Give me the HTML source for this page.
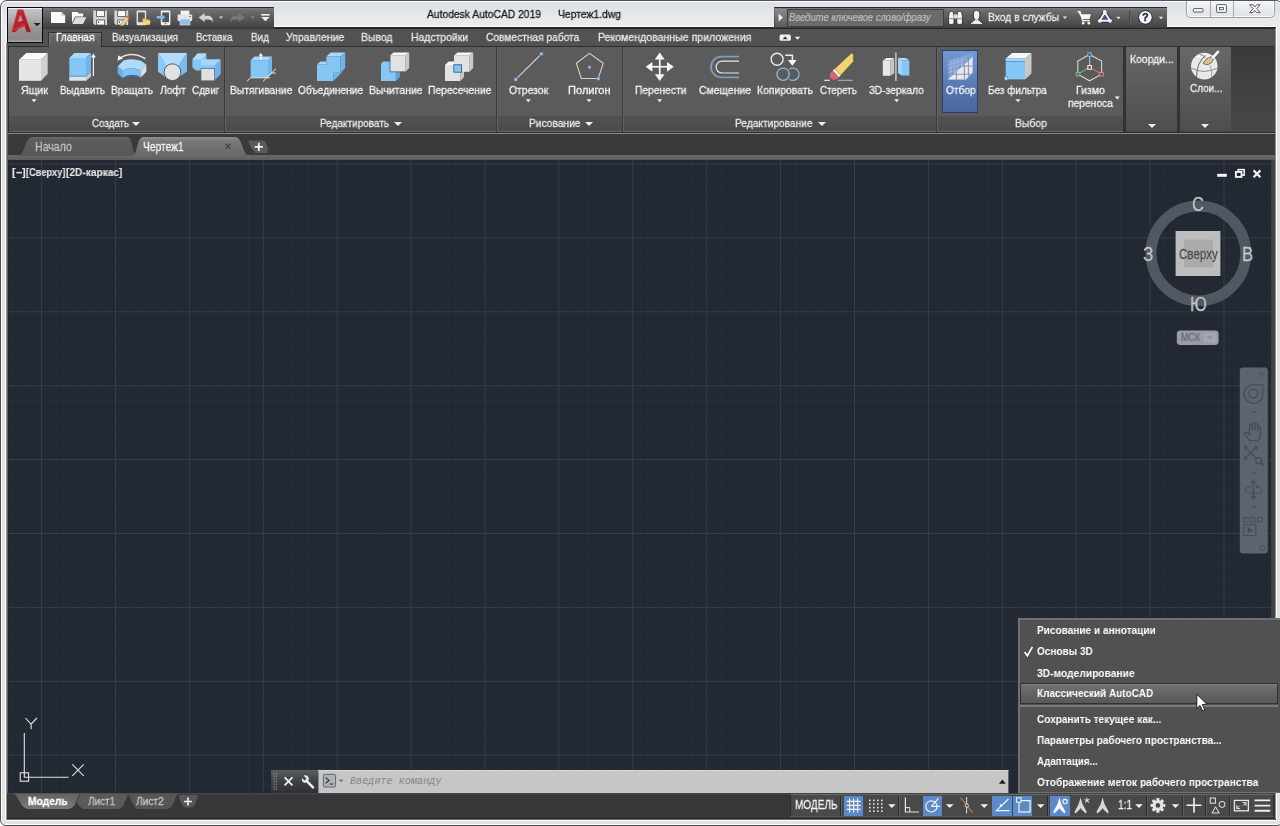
<!DOCTYPE html>
<html lang="ru">
<head>
<meta charset="utf-8">
<title>Autodesk AutoCAD 2019 - Чертеж1.dwg</title>
<style>
html,body{margin:0;padding:0;}
body{width:1280px;height:826px;overflow:hidden;position:relative;background:#fff;font-family:"Liberation Sans",sans-serif;}
.a{position:absolute;}
.t{position:absolute;white-space:pre;will-change:transform;-webkit-text-stroke:0.3px;transform-origin:0 50%;font-family:"Liberation Sans",sans-serif;}
svg{position:absolute;overflow:visible;}
#frame{left:0;top:0;width:1283px;height:826px;box-sizing:border-box;border:1px solid #505254;border-radius:7px 7px 6px 6px;
 background:linear-gradient(#dfe1e7 0px,#dee2eb 7px,#e6e7ea 14px,#ebebeb 26px,#e4e4e4 60px,#e3e3e3 100%);box-shadow:inset 0 0 0 1px #fdfdfd;}
#frameI{left:6px;top:26px;width:1271px;height:795px;box-sizing:border-box;border:1px solid #fdfdfd;background:#2a2a2a;}
#frameL{left:5px;top:43px;width:3px;height:777px;background:linear-gradient(90deg,#fdfdfd 0,#fdfdfd 33%,#a4a4a6 36%,#4a4a4c 100%);}
#frameR{left:1275px;top:28px;width:1px;height:791px;background:#8e8e90;}
#client{left:8px;top:29px;width:1267px;height:790px;background:#3b3b3b;}
/* ribbon */
#tabrow{left:7px;top:28px;width:1268px;height:18px;background:#525252;border-top:1px solid #262626;box-sizing:border-box;}
#ribbon{left:8px;top:46px;width:1267px;height:87px;background:#454545;}
.panel{position:absolute;top:47px;height:69px;background:#5b5b5b;}
.ptitle{position:absolute;top:116px;height:15px;background:linear-gradient(#525252,#4a4a4a);border-bottom:1px solid #686868;}
.psep{position:absolute;top:47px;height:85px;width:1px;background:#3a3a3a;}
.arr{position:absolute;width:0;height:0;margin-left:0.4px;border-left:2.6px solid transparent;border-right:2.6px solid transparent;border-top:2.8px solid #f0f0f0;}
.arrL{position:absolute;width:0;height:0;border-left:4px solid transparent;border-right:4px solid transparent;border-top:4px solid #f0f0f0;}
/* canvas */
#canvas{left:8px;top:160px;width:1263px;height:633px;background-color:#222933;overflow:hidden;}
#status{left:7px;top:793px;width:1268px;height:27px;background:#383838;border-bottom:1px solid #6a6a6a;box-shadow:inset 0 -1px 0 #2a2829;box-sizing:border-box;}
.hl{position:absolute;top:795.5px;height:20px;background:#5c8ac8;}
.ssep{position:absolute;top:795.5px;height:20px;width:1px;background:#2c2c2c;}
/* menu */
#menu{left:1018px;top:618px;width:264px;height:175.4px;box-sizing:border-box;background:#515151;border:2px solid #6e7074;border-bottom-width:1px;}
</style>
</head>
<body>
<div id="frame" class="a"></div>
<div id="frameI" class="a"></div>
<div id="frameL" class="a"></div>
<div id="frameR" class="a"></div>
<div id="client" class="a"></div>
<div id="tabrow" class="a"></div>
<div id="ribbon" class="a"></div>
<!-- app button -->
<div class="a" style="left:7px;top:7px;width:36px;height:36px;box-sizing:border-box;border:1px solid #0a0a0a;background:linear-gradient(#c6c6c6 0,#b4b4b4 25%,#969696 60%,#8a8a8a 92%,#a8a8a8 100%);box-shadow:inset 0 1px 0 #f2f2f2;"></div>
<!-- QAT -->
<div class="a" style="left:43px;top:7px;width:231px;height:22px;box-sizing:border-box;border-top:1px solid #2c2c2c;background:linear-gradient(#7e7e7e 0,#6e6e6e 2px,#5a5a5a 10px,#444 19px,#383838 21px);"></div>
<!-- infocenter -->
<div class="a" style="left:774px;top:7px;width:393px;height:21px;box-sizing:border-box;border-top:1px solid #2c2c2c;background:linear-gradient(#7e7e7e 0,#6e6e6e 2px,#5a5a5a 10px,#444 19px,#3a3a3a 20px);"></div>
<div class="a" style="left:775px;top:9px;width:12px;height:18px;background:linear-gradient(#8a8a8a,#5a5a5a);"></div>
<div class="a" style="left:787px;top:9px;width:157px;height:18px;box-sizing:border-box;border:1px solid #3e3e3e;background:#6b6b6b;"></div>
<!-- window buttons -->
<div class="a" style="left:1186px;top:1px;width:89px;height:17px;box-sizing:border-box;border:1px solid #9a9ea6;border-top:none;border-radius:0 0 5px 5px;background:linear-gradient(#f4f6f9,#e6e9ee 55%,#dfe2e8);box-shadow:inset 0 0 0 1px #fbfbfd;"></div>
<div class="a" style="left:1210px;top:1px;width:1px;height:16px;background:#a4a8b0;"></div>
<div class="a" style="left:1233px;top:1px;width:1px;height:16px;background:#a4a8b0;"></div>
<svg class="a" style="left:0;top:0" width="1280" height="60" viewBox="0 0 1280 60">
<!-- A logo -->
<defs><linearGradient id="lgA" x1="0" y1="0" x2="1" y2="1"><stop offset="0" stop-color="#c83038"/><stop offset="1" stop-color="#96181f"/></linearGradient></defs>
<path d="M17.6 9.6 L23.2 9.6 L31.4 32.4 L26.2 32.4 L24.4 26.4 L17.8 28 L16.4 32.4 L11.2 32.4 Z M20.4 15.6 L18.3 21.6 L22.4 20.4 Z" fill="url(#lgA)" stroke="#e07878" stroke-width="0.7" fill-rule="evenodd" stroke-linejoin="round"/>
<path d="M13.4 29.4 L24.6 22.6 L25.4 25 L15.4 31.4 Z" fill="#c8343c" opacity="0.8"/>
<path d="M33.6 23 L40.6 23 L37.1 26.2 Z" fill="#1e1e1e"/>
<!-- QAT icons -->
<g fill="#fafafa">
<path d="M51 12 H61.5 L65.2 15.5 V23 H51 Z"/>
<path d="M61.5 12 V15.5 H65.2 Z" fill="#bdbdbd"/>
<path d="M72 12 H77.5 L78.6 13.5 H83.2 V16.5 H75 L72 23 Z"/>
<path d="M75.6 17.3 H86.4 L83 24 H72.4 Z" fill="#dedede"/>
<!-- save -->
<path d="M93.2 10.4 H107 V25 H95 L93.2 23.2 Z" fill="#d4d4d6"/>
<rect x="96.6" y="10.4" width="8" height="6" fill="#fafafa" stroke="#4c4c4c" stroke-width="0.8"/>
<rect x="96.6" y="20" width="8" height="5" fill="#fafafa" stroke="#4c4c4c" stroke-width="0.8"/>
<rect x="98" y="21.6" width="1" height="1.4" fill="#333"/>
<!-- save as -->
<path d="M114.3 10.4 H128.2 V25 H116.1 L114.3 23.2 Z" fill="#d4d4d6"/>
<rect x="117.7" y="10.4" width="8" height="6" fill="#fafafa" stroke="#4c4c4c" stroke-width="0.8"/>
<rect x="117.7" y="20" width="8" height="5" fill="#fafafa" stroke="#4c4c4c" stroke-width="0.8"/>
<rect x="119" y="21.6" width="1" height="1.4" fill="#333"/>
<path d="M120.8 23.4 L126.2 16.6 L128.8 18.8 L123.6 25.4 L120.4 25.8 Z" fill="#e8d48a" stroke="#8a7a40" stroke-width="0.5"/>
<path d="M126.2 16.6 L127.2 15.4 L129.8 17.6 L128.8 18.8 Z" fill="#d8605c"/>
</g>
<!-- phone + folder -->
<rect x="136.6" y="10.6" width="9.6" height="14.6" rx="1.2" fill="#e4e4e4"/>
<rect x="138" y="12.4" width="6.8" height="9.8" fill="#5a5a5a"/>
<path d="M142.5 18.6 H145.6 L146.4 19.6 H149.6 V24.6 H142.5 Z" fill="#e8c060"/>
<path d="M143.6 21 H150.6 L149.6 24.8 H142.5 Z" fill="#f4d684"/>
<!-- phone + arrow -->
<rect x="160.8" y="10.6" width="9.6" height="14.6" rx="1.2" fill="#f0f0f0"/>
<rect x="162.2" y="12.4" width="6.8" height="9.8" fill="#4a5664"/>
<rect x="164.6" y="23" width="2" height="1.2" fill="#8a8a8a"/>
<path d="M156.6 16 H161.4 V14 L165.4 17.2 L161.4 20.4 V18.4 H156.6 Z" fill="#7cb8e8"/>
<!-- print -->
<rect x="180.6" y="10.6" width="8.8" height="4.4" fill="#f4f4f4"/>
<rect x="177.6" y="14.4" width="14.6" height="6.6" rx="0.8" fill="#e4e4e4"/>
<rect x="180" y="19" width="10" height="6" fill="#8cc0ea" stroke="#e4e4e4" stroke-width="0.6"/>
<rect x="189.4" y="16" width="1.4" height="1.2" fill="#666"/>
<!-- undo -->
<path d="M198.6 17.4 L204.6 13 V15.8 H208 C211.4 15.8 213.2 18.4 213 22.4 C212 20.2 210.6 19.4 208 19.4 H204.6 V22 Z" fill="#d2d2d2"/>
<path d="M218.8 16.4 H223.2 L221 18.8 Z" fill="#d8d8d8"/>
<!-- redo -->
<path d="M244.6 17.4 L238.6 13 V15.8 H235.2 C231.8 15.8 230 18.4 230.2 22.4 C231.2 20.2 232.6 19.4 235.2 19.4 H238.6 V22 Z" fill="#787878"/>
<path d="M250.3 16.4 H254.7 L252.5 18.8 Z" fill="#8a8a8a"/>
<!-- customize -->
<rect x="261.2" y="14" width="8.4" height="1.6" fill="#f0f0f0"/>
<path d="M261.2 17 H269.6 L265.4 21.2 Z" fill="#f0f0f0"/>
<!-- infocenter icons -->
<path d="M778.6 13.4 L783 17.4 L778.6 21.4 Z" fill="#f0f0f0"/>
<!-- binoculars -->
<g fill="#f4f4f4" stroke="#1e1e1e" stroke-width="0.8">
<path d="M948.6 16.4 Q948.8 11.2 951.3 11.2 Q953.8 11.2 954 16.4 V23 Q954 24.6 951.3 24.6 Q948.6 24.6 948.6 23 Z"/>
<path d="M956.8 16.4 Q957 11.2 959.6 11.2 Q962.2 11.2 962.4 16.4 V23 Q962.4 24.6 959.6 24.6 Q956.8 24.6 956.8 23 Z"/>
</g>
<rect x="953.8" y="14.4" width="3.2" height="4" fill="#e0e0e0"/>
<path d="M949.4 18.6 H953.4 M957.6 18.6 H961.6" stroke="#9a9a9a" stroke-width="1.2"/>
<!-- user -->
<path d="M969.4 24.4 L975 19.6 H978.2 L983.8 24.4 Z" fill="#f4f4f4" stroke="#1e1e1e" stroke-width="0.7" stroke-linejoin="round"/>
<ellipse cx="976.6" cy="15" rx="3.3" ry="4.7" fill="#f0f0f4" stroke="#1e1e1e" stroke-width="0.8"/>
<rect x="975.2" y="19" width="2.8" height="2" fill="#d0d0d4"/>
<path d="M1062.8 16.6 H1067.2 L1065 19 Z" fill="#e0e0e0"/>
<!-- cart -->
<path d="M1077.4 11.6 H1080 L1081 13.8 H1091.4 L1089.8 19.6 H1082.2 Z" fill="#f4f4f4" stroke="#2a2a2a" stroke-width="0.5"/>
<path d="M1077.4 11.6 H1080 L1082.6 20.6 H1089.8" fill="none" stroke="#f4f4f4" stroke-width="1.3"/>
<circle cx="1083.2" cy="23" r="1.5" fill="#f4f4f4"/><circle cx="1088.8" cy="23" r="1.5" fill="#f4f4f4"/>
<!-- A360 triangle -->
<path d="M1104.8 12.2 L1110.2 20.8 H1099.6 Z" fill="#3a4468" stroke="#1e2440" stroke-width="3.6" stroke-linejoin="round"/>
<path d="M1104.8 12.2 L1110.2 20.8 H1099.6 Z" fill="#46507a" stroke="#eef0f8" stroke-width="2" stroke-linejoin="round"/>
<circle cx="1104.8" cy="12" r="1.9" fill="#f4f6fc"/><circle cx="1099.8" cy="20.8" r="1.9" fill="#f4f6fc"/><circle cx="1110" cy="20.8" r="1.9" fill="#f4f6fc"/>
<path d="M1116.2 16.8 H1120.6 L1118.4 19.2 Z" fill="#e6e6e6"/>
<rect x="1129" y="11" width="1" height="14" fill="#444"/><rect x="1130" y="11" width="1" height="14" fill="#626262"/>
<!-- help -->
<circle cx="1145.4" cy="17.4" r="6.8" fill="#f8f8fa" stroke="#1a1a1a" stroke-width="0.9"/>
<path d="M1158.8 16.8 H1163.2 L1161 19.2 Z" fill="#e6e6e6"/>
<!-- window buttons glyphs -->
<rect x="1193.4" y="8.6" width="9.6" height="3.4" rx="0.8" fill="#fdfdfd" stroke="#4c4c50" stroke-width="0.9"/>
<rect x="1216.6" y="4.6" width="9.8" height="7.8" rx="0.6" fill="#fdfdfd" stroke="#4c4c50" stroke-width="0.9"/>
<rect x="1219.4" y="7.4" width="4.2" height="2.4" fill="#e4e6ea" stroke="#4c4c50" stroke-width="0.8"/>
<path d="M1249.6 4.8 H1253 L1254.9 7 L1256.8 4.8 H1260.2 L1256.6 8.7 L1260.2 12.6 H1256.8 L1254.9 10.4 L1253 12.6 H1249.6 L1253.2 8.7 Z" fill="#fdfdfd" stroke="#4c4c50" stroke-width="0.9" stroke-linejoin="round"/>
<!-- tab row icon -->
<rect x="779.6" y="34.6" width="11.2" height="6.2" rx="1.6" fill="#f2f2f2"/>
<path d="M782.6 39.2 L785.2 36.2 L787.8 39.2 Z" fill="#3a3a3a"/>
<path d="M794.8 36.8 H800.2 L797.5 39.8 Z" fill="#f0f0f0"/>
</svg>
<span class="t" style="left:1142.4px;top:10.4px;font-size:11px;line-height:14px;font-weight:700;color:#1c2a6a;-webkit-text-stroke:0.4px #1c2a6a;">?</span>

<!-- active tab -->
<div class="a" style="left:48px;top:32px;width:54px;height:15px;box-sizing:border-box;border:1px solid #2f2f2f;border-bottom:none;background:linear-gradient(#6a6a6a,#5b5b5b);box-shadow:inset 1px 1px 0 #7a7a7a;"></div>
<!-- ribbon panels -->
<div class="a" style="left:8px;top:46px;width:1267px;height:1px;background:#2f2f2f;"></div>
<div class="a" style="left:48.8px;top:46px;width:52.4px;height:1px;background:#5b5b5b;"></div>
<div class="panel" style="left:9px;width:1114px;"></div>
<div class="ptitle" style="left:9px;width:1114px;"></div>
<div class="psep" style="left:223.5px;"></div><div class="psep" style="left:224.5px;background:#626262;"></div>
<div class="psep" style="left:495.5px;"></div><div class="psep" style="left:496.5px;background:#626262;"></div>
<div class="psep" style="left:621.5px;"></div><div class="psep" style="left:622.5px;background:#626262;"></div>
<div class="psep" style="left:935.5px;"></div><div class="psep" style="left:936.5px;background:#626262;"></div>
<div class="a" style="left:1123px;top:47px;width:3px;height:85px;background:#333;"></div>
<div class="a" style="left:1126px;top:47px;width:51px;height:84px;background:linear-gradient(#686868,#5a5a5a 50%,#4e4e4e);"></div>
<div class="a" style="left:1177px;top:47px;width:3px;height:85px;background:#333;"></div>
<div class="a" style="left:1180px;top:47px;width:51px;height:84px;background:linear-gradient(#686868,#5a5a5a 50%,#4e4e4e);"></div>
<div class="a" style="left:1231px;top:47px;width:44px;height:85px;background:linear-gradient(#3a3a3a,#484848);"></div>
<div class="a" style="left:8px;top:132px;width:1267px;height:2px;background:linear-gradient(#2c2c2c 0,#2c2c2c 55%,#8a8a8a 55%,#8a8a8a 100%);"></div>
<div class="a" style="left:8px;top:47px;width:1px;height:85px;background:#2c2c2c;"></div>
<!-- Отбор highlight -->
<div class="a" style="left:942px;top:50px;width:36px;height:63px;box-sizing:border-box;border:1px solid #2b406a;background:linear-gradient(#7398d4 0,#6486c2 35%,#5171ab 70%,#4a689f 100%);"></div>
<!-- dropdown arrows -->
<div class="arrL" style="left:131.5px;top:122px;"></div>
<div class="arrL" style="left:394px;top:122px;"></div>
<div class="arrL" style="left:585px;top:122px;"></div>
<div class="arrL" style="left:818px;top:122px;"></div>
<div class="arrL" style="left:1147.6px;top:123.5px;"></div>
<div class="arrL" style="left:1201px;top:123.5px;"></div>
<svg class="a" style="left:0;top:0" width="1280" height="140" viewBox="0 0 1280 140">
<!-- small arrows -->
<path d="M31.5 99.2 H36.5 L34.0 102.2 Z" fill="#f2f2f2"/>
<path d="M525.8 99.2 H530.8 L528.3 102.2 Z" fill="#f2f2f2"/>
<path d="M586.5 99.2 H591.5 L589.0 102.2 Z" fill="#f2f2f2"/>
<path d="M657.2 99.2 H662.2 L659.7 102.2 Z" fill="#f2f2f2"/>
<path d="M894.2 99.2 H899.2 L896.7 102.2 Z" fill="#f2f2f2"/>
<path d="M1015.5 99.2 H1020.5 L1018.0 102.2 Z" fill="#f2f2f2"/>
<path d="M1114.8 96.6 H1119.8 L1117.3 99.6 Z" fill="#f2f2f2"/>
<!-- Ящик -->
<path d="M19 59.8 L26.3 53 H47.7 L41 59.8 Z" fill="#f9f9f9"/>
<path d="M41 59.8 L47.7 53 V73.8 L41 80.8 Z" fill="#cfcfcf"/>
<rect x="19" y="59.8" width="22" height="21" fill="#e6e6e6"/>
<!-- Выдавить -->
<path d="M69.3 58 L74.4 53 H91 L86 58 Z" fill="#a9d8fb"/>
<path d="M86 58 L91 53 V71.6 L86 76.2 Z" fill="#6fb4ea"/>
<rect x="69.3" y="58" width="16.7" height="18.2" fill="#84c6f6"/>
<path d="M69.3 76.2 H86 L91 71.6 V76.2 L86 80.8 H69.3 Z" fill="#dfe3e8"/>
<path d="M86 76.2 L91 71.6 V76.2 L86 80.8 Z" fill="#c4c8cc"/>
<path d="M69.3 76.2 H86 L91 71.6" fill="none" stroke="#4a8ac4" stroke-width="0.8"/>
<path d="M93.4 76 V56" stroke="#f4f4f4" stroke-width="1.2"/><path d="M91 57.4 L93.4 53.2 L95.8 57.4 Z" fill="#f4f4f4"/>
<!-- Вращать -->
<path d="M119.4 58.4 Q131.4 50.4 145.4 58.8" fill="none" stroke="#e2e2e2" stroke-width="1.7"/>
<path d="M117.6 60.8 L118.2 55.2 L123 58.6 Z" fill="#f4f4f4"/>
<path d="M117.8 66.2 L123.6 60.6 Q132 57.8 141.4 61 L146.4 64.8 L140.8 70.6 Q131 65.4 122.6 70.8 Z" fill="#aedafb"/>
<path d="M117.8 66.2 L122.6 70.8 Q131 65.4 140.8 70.6 V77.6 Q131 72.4 122.6 78.4 L117.8 73.6 Z" fill="#7fc2f3"/>
<path d="M117.8 66.2 L122.6 70.8 V78.4 L117.8 73.6 Z" fill="#69afe2"/>
<path d="M140.8 70.6 L146.4 64.8 V71.8 L140.8 77.6 Z" fill="#dedede"/>
<path d="M122.4 78.6 Q131 72.6 140.8 77.8" fill="none" stroke="#3a6fa6" stroke-width="1.2"/>
<path d="M117.8 73.6 L122.6 78.4" fill="none" stroke="#3a6fa6" stroke-width="0.8"/>
<!-- Лофт -->
<path d="M158 53 H187 V71.4 L180 76.6 H165 L158 71.4 Z" fill="#78bcee"/>
<path d="M158.6 53 H186.4 L178.6 65 H166.4 Z" fill="#b2dcfb"/>
<path d="M158 53 L166.4 65 L165 76.6 L158 71.4 Z" fill="#8ccaf6"/>
<circle cx="172.4" cy="72.2" r="8.4" fill="#e2e2e2" stroke="#4a5f78" stroke-width="1"/>
<!-- Сдвиг -->
<path d="M192.4 59.4 L197.6 53.6 H206.4 V59.4 H220.4 V74 L214.6 80 V69 H201 V70.4 H196 L192.4 67.6 Z" fill="#86c6f4"/>
<path d="M192.4 59.4 L197.6 53.6 H206.4 L201.4 59.4 Z" fill="#b4ddfb"/>
<path d="M201.4 59.4 H220.4 L214.6 65.4 H201 Z" fill="#a6d5f9"/>
<path d="M214.6 65.4 L220.4 59.4 V74 L214.6 80 Z" fill="#6fb4ea"/>
<rect x="201" y="68.4" width="13.6" height="12.4" fill="#e0e0e0" stroke="#5a6e86" stroke-width="0.8"/>
<!-- Вытягивание -->
<path d="M250.6 60.2 L254.6 56.4 H272 L268 60.2 Z" fill="#a9d8fb"/>
<path d="M268 60.2 L272 56.4 V73.6 L268 77.6 Z" fill="#6fb4ea"/>
<rect x="250.6" y="60.2" width="17.4" height="17.4" fill="#86c6f4"/>
<path d="M260.8 60 V55" stroke="#f4f4f4" stroke-width="1.3"/><path d="M258.6 56.2 L260.8 52.8 L263 56.2 Z" fill="#f4f4f4"/>
<path d="M247 81.4 L250.4 77.8 H270" fill="none" stroke="#e8e8e8" stroke-width="1"/>
<path d="M263 81.4 L276 68.6 M271 73 H275.6" fill="none" stroke="#e8e8e8" stroke-width="1"/>
<!-- Объединение -->
<path d="M326.4 56.4 L330.6 52.6 H345.2 L340.4 56.4 Z" fill="#a9d8fb"/>
<path d="M317 64.6 L320.6 61.4 H326.4 V64.6 Z" fill="#a9d8fb"/>
<path d="M326.4 56.4 H340.4 V72 H333.2 V81 H317 V64.6 H326.4 Z" fill="#86c6f4"/>
<path d="M340.4 56.4 L345.2 52.6 V68 L340.4 72 Z" fill="#6fb4ea"/>
<path d="M333.2 72 H340.4 L345.2 68 L338 76.6 L333.2 81 Z" fill="#6fb4ea"/>
<!-- Вычитание -->
<path d="M381 65 Q381 61.4 384.6 61.4 H400 V76.6 L395.6 81 H381 Z" fill="#86c6f4"/>
<path d="M395.6 72 H400 V76.6 L395.6 81 Z" fill="#5c9ed6"/>
<path d="M390 55.4 L393.6 52.6 H409.2 L405.4 55.4 Z" fill="#f7f7f7"/>
<path d="M405.4 55.4 L409.2 52.6 V68 L405.4 71.8 Z" fill="#c8c8c8"/>
<rect x="390" y="55.4" width="15.4" height="16.4" fill="#e2e2e2"/>
<path d="M390 55.4 V71.8 H405.4" fill="none" stroke="#3a5f88" stroke-width="0.8"/>
<!-- Пересечение -->
<path d="M445 65 L448.6 61.4 H464 L460.4 65 Z" fill="#f4f4f4"/>
<rect x="445" y="65" width="15.4" height="16" fill="#e2e2e2"/>
<path d="M460.4 65 L464 61.4 V77 L460.4 81 Z" fill="#c8c8c8"/>
<path d="M454 55.4 L457.6 52.6 H473.2 L469.4 55.4 Z" fill="#f7f7f7"/>
<path d="M469.4 55.4 L473.2 52.6 V68 L469.4 71.8 Z" fill="#c8c8c8"/>
<rect x="454" y="55.4" width="15.4" height="16.4" fill="#e2e2e2"/>
<rect x="453.8" y="64.8" width="7.8" height="7.4" fill="#86c6f4" stroke="#2f5f92" stroke-width="0.9"/>
<!-- Отрезок -->
<path d="M515.7 79.4 L541.4 54" stroke="#cfcfcf" stroke-width="1.1"/>
<rect x="514" y="77.8" width="3.4" height="3.4" fill="#9cc4e8" stroke="#4e6a88" stroke-width="0.7"/>
<rect x="539.7" y="52.2" width="3.4" height="3.4" fill="#9cc4e8" stroke="#4e6a88" stroke-width="0.7"/>
<!-- Полигон -->
<path d="M589.5 53.4 L603.2 63.3 L598.3 78.5 H581.3 L576.4 63.3 Z" fill="none" stroke="#d4d4d4" stroke-width="1.1"/>
<rect x="588" y="65.8" width="3" height="3" fill="#9cc4e8" stroke="#4e6a88" stroke-width="0.6"/>
<rect x="596.8" y="77" width="3.2" height="3.2" fill="#9cc4e8" stroke="#4e6a88" stroke-width="0.6"/>
<!-- Перенести -->
<g fill="#f6f6f6">
<path d="M659.7 52.6 L664.6 59.4 H654.8 Z"/><path d="M659.7 81 L664.6 74.2 H654.8 Z"/>
<path d="M645.7 66.8 L652.4 61.9 V71.7 Z"/><path d="M673.8 66.8 L667 61.9 V71.7 Z"/>
<rect x="658.9" y="58" width="1.7" height="18"/><rect x="651" y="65.9" width="17.4" height="1.7"/>
</g>
<!-- Смещение -->
<path d="M739 56.6 H721.4 A10.4 10.4 0 0 0 721.4 77.4 H739" fill="none" stroke="#7f9cb8" stroke-width="1.9"/>
<path d="M739 61.2 H722 A5.9 5.9 0 0 0 722 73 H739" fill="none" stroke="#e8e8e8" stroke-width="1.2"/>
<!-- Копировать -->
<circle cx="777.1" cy="59.3" r="6" fill="none" stroke="#ececec" stroke-width="1.4"/>
<path d="M785.2 55.2 H792.4 V60.4" fill="none" stroke="#ececec" stroke-width="1.5"/>
<path d="M788 60 H796.6 L792.3 65.8 Z" fill="#f6f6f6"/>
<path d="M789.4 79.2 A6.1 6.1 0 1 0 789.4 69.2" fill="none" stroke="#8fb9e0" stroke-width="1.3"/>
<circle cx="783.1" cy="74.2" r="6.1" fill="none" stroke="#8fb9e0" stroke-width="1.3"/>
<!-- Стереть -->
<path d="M824.2 80.3 H829.8" stroke="#ececec" stroke-width="1.1"/>
<path d="M837.8 80.3 H852.8" stroke="#8fb9e0" stroke-width="1.1"/>
<path d="M834.6 68.8 L851.6 53 L853.4 54.2 V61.6 L840.6 75.4 Z" fill="#f4d274" stroke="#6a5a2a" stroke-width="0.6" stroke-linejoin="round"/>
<path d="M832.8 70.6 L834.6 68.8 L840.6 75.4 L838.8 77.2 Z" fill="#f8f4ee"/>
<path d="M830.4 73 L832.8 70.6 L838.8 77.2 Q836.4 80.6 832.6 79.6 Q828.4 77.6 830.4 73 Z" fill="#e0626e"/>
<!-- 3D-зеркало -->
<path d="M882.8 60.6 L886.6 58 H894.2 L890.2 60.6 Z" fill="#f8f8f8"/>
<rect x="882.8" y="60.6" width="7.4" height="15.2" fill="#e6e6e6"/>
<path d="M890.2 60.6 L894.2 58 V73.2 L890.2 75.8 Z" fill="#c6c6c6"/>
<path d="M902 60.6 L898 58 H905.6 L909.4 60.6 Z" fill="#b6defb"/>
<rect x="902" y="60.6" width="7.4" height="15.2" fill="#86c6f4"/>
<path d="M902 60.6 L898 58 V73.2 L902 75.8 Z" fill="#a4d4f9"/>
<path d="M898 73.2 L902 75.8 H909.4" fill="none" stroke="#3e78b0" stroke-width="0.7"/>
<path d="M895.9 52.4 V81" stroke="#c6c6c6" stroke-width="1.5"/>
<!-- Отбор icon -->
<g>
<path d="M948 79.6 V60.6 L972.6 53.4 V72.4 L966 79.6 Z" fill="#8fb0de" opacity="0.55"/>
<path d="M948 79.6 L972.6 57 V72.4 L966 79.6 Z" fill="#e6e8ec"/>
<path d="M956.4 72 V79.6 M964.4 64.6 V79.6 M968.4 56.6 V76.8 M948 74.2 H971 M958 66 H972.6" stroke="#7f8898" stroke-width="0.9" fill="none"/>
<path d="M951 60 V77 M954.4 59 V74 M958 58 V70.6 M961.6 57 V67.4 M948 64.6 L966 59.2 M948 68.6 L963.4 64 M948 72.6 L959 69.4" stroke="#b9cdea" stroke-width="0.6" fill="none" opacity="0.8"/>
</g>
<!-- Без фильтра -->
<path d="M1005.7 58.6 L1012.2 53 H1031.5 L1025 58.6 Z" fill="#f6f6f6"/>
<path d="M1025 58.6 L1031.5 53 V73.6 L1025 79.4 Z" fill="#c8c8c8"/>
<rect x="1005.7" y="58.6" width="19.3" height="20.8" fill="#86c6f4"/>
<path d="M1005.7 61.2 H1025" stroke="#4a86c0" stroke-width="0.9"/>
<rect x="1005.7" y="58.6" width="19.3" height="2.2" fill="#a9d8fb"/>
<rect x="1004.6" y="76.8" width="3.2" height="3.2" fill="#cfe6fa" stroke="#4a86c0" stroke-width="0.7"/>
<!-- Гизмо -->
<path d="M1089.6 54.4 L1101.6 61 V74.2 L1089.6 80.8 L1077.8 74.2 V61 Z" fill="none" stroke="#d6d6d6" stroke-width="1.1"/>
<path d="M1089.6 67.4 V55.4" stroke="#8cc0ee" stroke-width="1.2"/>
<path d="M1089.6 67.4 L1078.4 73.8" stroke="#6cb482" stroke-width="1.2"/>
<path d="M1089.6 67.4 L1100.8 73.8" stroke="#d06a6a" stroke-width="1.2"/>
<rect x="1087.8" y="52.8" width="3.6" height="3.6" fill="#4a6a8a" stroke="#7fb2e2" stroke-width="0.9"/>
<rect x="1087.8" y="65.6" width="3.6" height="3.6" fill="#5a5a5a" stroke="#f4f4f4" stroke-width="1"/>
<rect x="1076.2" y="72.4" width="3.6" height="3.6" fill="#4a7a5a" stroke="#7cc090" stroke-width="0.9"/>
<rect x="1099.6" y="72.4" width="3.6" height="3.6" fill="#8a4a4a" stroke="#dc8a8a" stroke-width="0.9"/>
<!-- Слои globe -->
<circle cx="1204.3" cy="66.1" r="13.3" fill="#e9e9e9"/>
<path d="M1195.4 57 Q1203 51.6 1212 56.4 L1206.4 60 Q1201 56.4 1195.4 57 Z" fill="#f8f8f8"/>
<path d="M1191.4 68.2 Q1204 74.6 1217.2 68.2" fill="none" stroke="#8c8c8c" stroke-width="1"/>
<path d="M1205.6 55.4 Q1196.4 63 1196.6 77" fill="none" stroke="#6e6e6e" stroke-width="1.1"/>
<path d="M1199.4 54.2 Q1203.4 55 1205.8 58" fill="none" stroke="#7c7c7c" stroke-width="0.9"/>
<path d="M1210 65.4 Q1212.6 70.4 1211.6 77" fill="none" stroke="#9a9a9a" stroke-width="0.9"/>
<path d="M1203.2 63.6 Q1205 58.4 1211.4 56.6 L1213.6 58.8 Q1212.6 63.6 1208.2 64.6 Q1205 64.8 1203.2 63.6 Z" fill="#d9bd8e" stroke="#5a4a30" stroke-width="0.7"/>
<path d="M1213 57.4 L1218 51.8" stroke="#f8f8f8" stroke-width="2.6" stroke-linecap="round"/>
</svg>

<div class="a" style="left:8px;top:134px;width:1267px;height:22px;background:#3a3a3a;"></div>
<div class="a" style="left:8px;top:155px;width:1267px;height:5px;background:linear-gradient(#6a6a6a,#5c5c5c);"></div>
<div class="a" style="left:1271px;top:160px;width:4px;height:633px;background:linear-gradient(90deg,#3c3d40,#48484b);"></div>
<svg class="a" style="left:0;top:130px" width="300" height="32" viewBox="0 130 300 32">
<defs>
<linearGradient id="tg1" x1="0" y1="0" x2="0" y2="1"><stop offset="0" stop-color="#696969"/><stop offset="0.15" stop-color="#5c5c5c"/><stop offset="1" stop-color="#585858"/></linearGradient>
<linearGradient id="tg2" x1="0" y1="0" x2="0" y2="1"><stop offset="0" stop-color="#8e8e8e"/><stop offset="0.2" stop-color="#787878"/><stop offset="1" stop-color="#686868"/></linearGradient>
</defs>
<path d="M18 156 C25 156 24 137 33 137 H127 C134 137 131 156 138 156 Z" fill="url(#tg1)"/>
<path d="M131 156.4 C138.5 156.4 135.6 137 143.6 137 H234.6 C243.6 137 241.6 156.4 250.6 156.4 Z" fill="url(#tg2)"/>
<path d="M225.6 143.8 L230.6 148.8 M230.6 143.8 L225.6 148.8" stroke="#474747" stroke-width="1.5"/>
<path d="M248.4 140.4 H264 Q269.6 146 267 153 H255.6 Q249.6 148 248.4 140.4 Z" fill="#5a5a5a"/>
<path d="M258.8 142.8 V151 M254.7 146.9 H262.9" stroke="#f4f4f4" stroke-width="1.7"/>
</svg>

<div id="canvas" class="a">
<svg class="a" style="left:0;top:0" width="1263" height="633" viewBox="0 0 1263 633"><path d="M4.0 0V633M18.8 0V633M48.4 0V633M63.2 0V633M77.9 0V633M92.7 0V633M122.3 0V633M137.1 0V633M151.8 0V633M166.6 0V633M196.2 0V633M211.0 0V633M225.7 0V633M240.5 0V633M270.1 0V633M284.9 0V633M299.6 0V633M314.4 0V633M344.0 0V633M358.8 0V633M373.5 0V633M388.3 0V633M417.9 0V633M432.7 0V633M447.4 0V633M462.2 0V633M491.8 0V633M506.6 0V633M521.3 0V633M536.1 0V633M565.7 0V633M580.5 0V633M595.2 0V633M610.0 0V633M639.6 0V633M654.4 0V633M669.1 0V633M683.9 0V633M713.5 0V633M728.3 0V633M743.0 0V633M757.8 0V633M787.4 0V633M802.2 0V633M816.9 0V633M831.7 0V633M861.3 0V633M876.1 0V633M890.8 0V633M905.6 0V633M935.2 0V633M950.0 0V633M964.7 0V633M979.5 0V633M1009.1 0V633M1023.9 0V633M1038.6 0V633M1053.4 0V633M1083.0 0V633M1097.8 0V633M1112.5 0V633M1127.3 0V633M1156.9 0V633M1171.7 0V633M1186.4 0V633M1201.2 0V633M1230.8 0V633M1245.6 0V633M1260.3 0V633M0 18.8H1263M0 33.6H1263M0 48.3H1263M0 63.1H1263M0 92.7H1263M0 107.5H1263M0 122.2H1263M0 137.0H1263M0 166.6H1263M0 181.4H1263M0 196.1H1263M0 210.9H1263M0 240.5H1263M0 255.3H1263M0 270.0H1263M0 284.8H1263M0 314.4H1263M0 329.2H1263M0 343.9H1263M0 358.7H1263M0 388.3H1263M0 403.1H1263M0 417.8H1263M0 432.6H1263M0 462.2H1263M0 477.0H1263M0 491.7H1263M0 506.5H1263M0 536.1H1263M0 550.9H1263M0 565.6H1263M0 580.4H1263M0 610.0H1263M0 624.8H1263" stroke="#272e38" stroke-width="1" fill="none"/><path d="M33.6 0V633M107.5 0V633M181.4 0V633M255.3 0V633M329.2 0V633M403.1 0V633M477.0 0V633M550.9 0V633M624.8 0V633M698.7 0V633M772.6 0V633M846.5 0V633M920.4 0V633M994.3 0V633M1068.2 0V633M1142.1 0V633M1216.0 0V633M0 4.0H1263M0 77.9H1263M0 151.8H1263M0 225.7H1263M0 299.6H1263M0 373.5H1263M0 447.4H1263M0 521.3H1263M0 595.2H1263" stroke="#353d4b" stroke-width="1" fill="none"/></svg>
</div>
<svg class="a" style="left:0;top:160px" width="1280" height="640" viewBox="0 160 1280 640">
<!-- viewport controls -->
<rect x="1217.2" y="173.8" width="9.6" height="3" fill="#f4f4f4"/>
<rect x="1238.2" y="169.6" width="6" height="5.6" fill="none" stroke="#f4f4f4" stroke-width="1.5"/>
<rect x="1235.9" y="171.9" width="5.6" height="5" fill="#1a1f27" stroke="#f4f4f4" stroke-width="1.9"/>
<path d="M1253.6 170.4 L1260.4 177.2 M1260.4 170.4 L1253.6 177.2" stroke="#f4f4f4" stroke-width="2.2"/>
<!-- viewcube -->
<circle cx="1198.4" cy="253.4" r="47.4" fill="none" stroke="#525862" stroke-width="10.8"/>
<rect x="1175.6" y="231" width="44.8" height="45" fill="#bcbdbf"/>
<rect x="1184" y="239.6" width="28.8" height="27.8" fill="#ababab"/>
<rect x="1176.8" y="330.4" width="41.8" height="14.6" rx="3.4" fill="#9a9ca8"/>
<rect x="1203.6" y="333" width="12.6" height="9.4" rx="1.6" fill="#a4a6b2"/>
<path d="M1206.6 336.2 H1213 L1209.8 339.6 Z" fill="#8e909c"/>
<!-- nav bar -->
<rect x="1239.8" y="367.6" width="28" height="186" rx="3" fill="#5e646d"/>
<g fill="none" stroke="#474d57" stroke-width="1.3">
<path d="M1259.4 373.6 H1263.4 M1259.4 376 H1263.4" stroke-width="0.9"/>
<path d="M1262.8 385 V394 A9.4 9.4 0 1 1 1253.6 384.6 Z"/>
<circle cx="1253.4" cy="393.6" r="4.4"/>
<path d="M1252.6 412 H1255.4" stroke-width="1.4"/>
<path d="M1249.6 440.4 Q1246 436 1243.8 433.4 Q1245.4 431 1248.2 433.6 L1249.6 435 V425.4 Q1251 423.4 1252.2 425.4 V430 V423.6 Q1253.6 421.6 1255 423.6 V430 V424.6 Q1256.4 422.8 1257.8 424.8 V431 V427.6 Q1259.2 426 1260.4 427.8 V436 Q1260.4 439 1258.4 440.6 Z"/>
<path d="M1244.6 446.6 L1257 459 M1257 446.6 L1244.6 459 M1244.6 446.6 h3 M1244.6 446.6 v3 M1257 446.6 h-3 M1257 446.6 v3 M1244.6 459 h3 M1244.6 459 v-3"/>
<circle cx="1258.6" cy="460.6" r="3"/><path d="M1260.8 462.8 L1263.6 465.6" stroke-width="1.8"/>
<path d="M1252.6 473.4 H1255.4" stroke-width="1.4"/>
<path d="M1253.4 481 V498 M1250.6 483.6 L1253.4 480.4 L1256.2 483.6 M1250.6 495.6 L1253.4 498.8 L1256.2 495.6"/>
<path d="M1251.4 486.4 Q1244.6 487.6 1245 490.4 Q1246 493.4 1254 493.6 Q1262 493.2 1262.4 490.4 Q1262 488 1256.4 486.6 M1257.6 484.8 L1255.6 486.6 L1257.8 488.4" stroke-width="1"/>
<path d="M1252.6 507 H1255.4" stroke-width="1.4"/>
<rect x="1243.6" y="517.4" width="4.6" height="4.6" stroke-width="0.9"/><rect x="1250.6" y="517.4" width="4.6" height="4.6" stroke-width="0.9"/><rect x="1257.6" y="517.4" width="4.6" height="4.6" stroke-width="0.9"/>
<rect x="1243.8" y="524.6" width="12" height="11" stroke-width="1"/>
<path d="M1247.6 527 V533.4 L1253 530.2 Z" fill="#474d57" stroke="none"/>
<circle cx="1262.4" cy="547.6" r="2.4" stroke-width="0.9"/>
</g>
<!-- UCS icon -->
<g fill="none" stroke="#e2e2e2" stroke-width="1.1">
<path d="M24.3 733 V777.3 H68.5"/>
<rect x="20.2" y="772.8" width="8.4" height="8.4"/>
<path d="M25.4 718 L31.1 724.2 L36.9 718 M31.1 724.2 V729.2"/>
<path d="M72.3 764.3 L83.7 775.9 M83.7 764.3 L72.3 775.9"/>
</g>
<!-- command line -->
<defs><linearGradient id="cg" x1="0" y1="0" x2="0" y2="1"><stop offset="0" stop-color="#5a5d62"/><stop offset="0.5" stop-color="#3e4044"/><stop offset="1" stop-color="#2e3034"/></linearGradient></defs>
<rect x="271" y="770" width="47.4" height="23" fill="url(#cg)"/>
<rect x="318.4" y="770" width="690" height="23" fill="#c6c6c6"/>
<rect x="318.4" y="770" width="690" height="1" fill="#d8d8d8"/>
<path d="M274 773 V790 M276.4 773 V790" stroke="#8a8e96" stroke-width="1.1" stroke-dasharray="1.4 1.2"/>
<path d="M284.6 777.4 L292.4 785.4 M292.4 777.4 L284.6 785.4" stroke="#f0f0f0" stroke-width="1.7"/>
<path d="M303.6 775.6 Q307.2 774.6 308.6 777.6 Q309.2 779.4 308.2 780.8 L314.4 787 Q314.6 788.8 312.6 788.8 L306.4 782.6 Q304 783.4 302.4 781.4 Q301.4 779.8 302 778.2 L304.6 780.6 L306.6 778.8 Z" fill="#ececec"/>
<rect x="323.4" y="774.4" width="12.2" height="12.6" rx="1.2" fill="#aeb2ba" stroke="#585c66" stroke-width="0.9"/>
<path d="M325.6 777.6 L329 780.4 L325.6 783.2 M329.6 784 H333.4" fill="none" stroke="#30343c" stroke-width="1.2"/>
<path d="M338.6 779.6 H343.4 L341 782.2 Z" fill="#70747c"/>
<path d="M999 783.8 L1002.4 779.6 L1005.8 783.8 Z" fill="#1e1e1e"/>
</svg>

<div id="status" class="a"></div>
<div class="a" style="left:8px;top:793px;width:1267px;height:2px;background:linear-gradient(#42464a,#3b3c3d);"></div>
<div class="a" style="left:790px;top:794px;width:484px;height:23px;box-sizing:border-box;border:1px solid #66686a;border-left-color:#2c2c2c;border-right-color:#2c2c2c;border-bottom-color:#5c5c5c;background:#494949;"></div>
<div class="hl" style="left:844px;width:19px;"></div>
<div class="hl" style="left:923px;width:19px;"></div>
<div class="hl" style="left:992px;width:20px;"></div>
<div class="hl" style="left:1013px;width:19.4px;"></div>
<div class="hl" style="left:1050.4px;width:19.4px;"></div>
<div class="ssep" style="left:840px;"></div><div class="ssep" style="left:841px;background:#5e5e5e;"></div>
<div class="ssep" style="left:898.4px;"></div><div class="ssep" style="left:899.4px;background:#5e5e5e;"></div>
<div class="ssep" style="left:1047.4px;"></div><div class="ssep" style="left:1048.4px;background:#5e5e5e;"></div>
<div class="ssep" style="left:1146.4px;"></div><div class="ssep" style="left:1147.4px;background:#5e5e5e;"></div>
<div class="ssep" style="left:1182.4px;"></div><div class="ssep" style="left:1183.4px;background:#5e5e5e;"></div>
<div class="ssep" style="left:1205.4px;"></div><div class="ssep" style="left:1206.4px;background:#5e5e5e;"></div>
<div class="ssep" style="left:1228.8px;"></div><div class="ssep" style="left:1229.8px;background:#5e5e5e;"></div>
<svg class="a" style="left:0;top:790px" width="1280" height="36" viewBox="0 790 1280 36">
<!-- layout tabs -->
<defs><linearGradient id="mg" x1="0" y1="0" x2="0" y2="1"><stop offset="0" stop-color="#626262"/><stop offset="1" stop-color="#7a7a7a"/></linearGradient></defs>
<path d="M70 793.4 H129 C125 798 125 809 117 809 H84 C80 809 76 800 70 793.4 Z" fill="#5a5a5a"/>
<path d="M124 793.4 H178 C174 798 174 809 166 809 H138 C132 809 131 798 127 793.4 Z" fill="#565656"/><path d="M127.6 794 C131 798 131.6 806 136 808.6" fill="none" stroke="#3a3a3a" stroke-width="1"/>
<path d="M178.6 795 H198.4 C196 800 196 807.6 190 807.6 H185.6 C181 806 180 799 178.6 795 Z" fill="#575757"/>
<path d="M14 793.4 H80.4 C76.4 798 76.4 809 68.4 809 H29 C21 809 20 798 14 793.4 Z" fill="url(#mg)"/><path d="M80.6 793.6 C76.6 798 76.6 808 69.4 809" fill="none" stroke="#3c3c3c" stroke-width="0.9"/>
<path d="M188 797.6 V805.4 M184.1 801.5 H191.9" stroke="#f0f0f0" stroke-width="1.7"/>
<!-- grid -->
<g stroke="#f4f4f4" stroke-width="1.1" fill="none">
<path d="M849.6 798.4 V812.6 M853.6 798.4 V812.6 M857.6 798.4 V812.6 M846.6 801.4 H860.6 M846.6 805.4 H860.6 M846.6 809.4 H860.6"/>
</g>
<g fill="#e6e6e6">
<rect x="869" y="799.6" width="1.6" height="1.6"/><rect x="873" y="799.6" width="1.6" height="1.6"/><rect x="877" y="799.6" width="1.6" height="1.6"/><rect x="881" y="799.6" width="1.6" height="1.6"/>
<rect x="869" y="803.2" width="1.6" height="1.6"/><rect x="873" y="803.2" width="1.6" height="1.6"/><rect x="877" y="803.2" width="1.6" height="1.6"/><rect x="881" y="803.2" width="1.6" height="1.6"/>
<rect x="869" y="806.8" width="1.6" height="1.6"/><rect x="873" y="806.8" width="1.6" height="1.6"/><rect x="877" y="806.8" width="1.6" height="1.6"/><rect x="881" y="806.8" width="1.6" height="1.6"/>
<rect x="869" y="810.4" width="1.6" height="1.6"/><rect x="873" y="810.4" width="1.6" height="1.6"/><rect x="877" y="810.4" width="1.6" height="1.6"/><rect x="881" y="810.4" width="1.6" height="1.6"/>
</g>
<g fill="#f2f2f2">
<path d="M888.1 804.2 H895.7 L891.9 808 Z"/>
<path d="M945.9 804.2 H953.5 L949.7 808 Z"/>
<path d="M980.4 804.2 H988.0 L984.2 808 Z"/>
<path d="M1036.9 804.2 H1044.5 L1040.7 808 Z"/>
<path d="M1135.2 804.2 H1142.8 L1139.0 808 Z"/>
<path d="M1171.7 804.2 H1179.3 L1175.5 808 Z"/>
</g>
<!-- ortho -->
<path d="M905.4 797.6 V812 H919" fill="none" stroke="#e8e8e8" stroke-width="1.2"/>
<path d="M905.4 807.6 H909.8 V812" fill="none" stroke="#e8e8e8" stroke-width="1"/>
<!-- polar -->
<circle cx="931.4" cy="806.4" r="5.6" fill="none" stroke="#f4f4f4" stroke-width="1.2"/>
<path d="M931.4 806.4 H940 M931.4 806.4 L938.4 798.4" fill="none" stroke="#f4f4f4" stroke-width="1.1"/>
<!-- isodraft -->
<path d="M966.6 797 V813.6" stroke="#c8d8c0" stroke-width="1.1"/>
<path d="M960.6 797.6 L972.6 812.6" stroke="#c8704a" stroke-width="1.2"/>
<circle cx="966.8" cy="805.6" r="1.7" fill="#494949" stroke="#e8e8e8" stroke-width="0.9"/>
<!-- otrack -->
<path d="M1008.4 799 L996.4 810.6 H1009.6" fill="none" stroke="#f4f4f4" stroke-width="1.2"/>
<circle cx="1001" cy="805.6" r="1.3" fill="#f4f4f4"/>
<!-- osnap -->
<rect x="1019" y="800.6" width="11" height="11.4" fill="none" stroke="#f4f4f4" stroke-width="1.2"/>
<rect x="1016.6" y="797.8" width="4.4" height="4.4" fill="#5b86c4" stroke="#f4f4f4" stroke-width="1"/>
<!-- annotation icons -->
<path d="M1059.4 797.6 L1061.3000000000002 804 L1065.6000000000001 812 L1064.6000000000001 813.4 L1060.3000000000002 809.6 L1059.4 808 L1058.5 809.6 L1054.2 813.4 L1053.2 812 L1057.5 804 Z" fill="#f4f8fc"/>
<circle cx="1065" cy="801.6" r="2.2" fill="none" stroke="#f4f8fc" stroke-width="1.1"/>
<path d="M1080.6 797.6 L1082.5 804 L1086.8 812 L1085.8 813.4 L1081.5 809.6 L1080.6 808 L1079.6999999999998 809.6 L1075.3999999999999 813.4 L1074.3999999999999 812 L1078.6999999999998 804 Z" fill="#d8d8d8"/>
<path d="M1086.8 796.6 L1087.6 799.4 L1090.4 798.6 L1088.2 800.6 L1089.4 803.4 L1087 801.6 L1084.8 803.6 L1085.8 800.8 L1083.6 799.2 L1086.2 799.4 Z" fill="#d8d8d8"/>
<path d="M1102.6 797.6 L1104.5 804 L1108.8 812 L1107.8 813.4 L1103.5 809.6 L1102.6 808 L1101.6999999999998 809.6 L1097.3999999999999 813.4 L1096.3999999999999 812 L1100.6999999999998 804 Z" fill="#d8d8d8"/>
<!-- gear -->
<g transform="translate(1157.9 805.4)">
<g fill="#e4e4e4">
<rect x="-1.5" y="-7.4" width="3" height="14.8"/>
<rect x="-1.5" y="-7.4" width="3" height="14.8" transform="rotate(45)"/>
<rect x="-1.5" y="-7.4" width="3" height="14.8" transform="rotate(90)"/>
<rect x="-1.5" y="-7.4" width="3" height="14.8" transform="rotate(135)"/>
<circle r="5.4"/>
</g>
<circle r="2.3" fill="#494949"/>
</g>
<!-- plus -->
<path d="M1194 797.8 V812.8 M1186.5 805.3 H1201.5" stroke="#f2f2f2" stroke-width="1.6"/>
<!-- shapes -->
<rect x="1210.2" y="798" width="5.2" height="5.2" fill="none" stroke="#e8e8e8" stroke-width="1"/>
<circle cx="1222" cy="804.4" r="3" fill="none" stroke="#e8e8e8" stroke-width="1"/>
<path d="M1215.6 806.8 L1219.2 813 H1212 Z" fill="none" stroke="#e8e8e8" stroke-width="1"/>
<!-- fullscreen -->
<rect x="1234.4" y="800.4" width="14" height="10.4" fill="none" stroke="#e8e8e8" stroke-width="1.3"/>
<path d="M1242.6 802.6 H1246 V806 M1246 802.6 L1243 805.6 M1240.2 808.6 H1236.8 V805.2 M1236.8 808.6 L1239.8 805.6" fill="none" stroke="#e8e8e8" stroke-width="1"/>
<!-- hamburger -->
<path d="M1254.6 800.4 H1270.2 M1254.6 805.6 H1270.2 M1254.6 810.8 H1270.2" stroke="#f0f0f0" stroke-width="1.9"/>
</svg>

<div id="menu" class="a"></div>
<div class="a" style="left:1020px;top:682.5px;width:258px;height:21.5px;box-sizing:border-box;border:1px solid #323232;background:linear-gradient(#7a7a7a 0,#6e6e6e 15%,#626262 55%,#5a5a5a 100%);"></div>
<div class="a" style="left:1020px;top:705.4px;width:258px;height:1.6px;background:#7c7c7c;"></div>
<svg class="a" style="left:1018px;top:640px" width="262" height="80" viewBox="1018 640 262 80">
<path d="M1024.6 652 L1027.4 655.6 L1032.4 646.8" fill="none" stroke="#ffffff" stroke-width="1.7"/>
<path d="M1196.8 694.2 V708.4 L1200 705.4 L1202.6 711 L1204.8 710 L1202.4 704.6 L1206.8 704.2 Z" fill="#ffffff" stroke="#111" stroke-width="0.9" stroke-linejoin="round"/>
</svg>

<span class="t" style="left:427.0px;top:7.0px;font-size:11px;line-height:15px;color:#1a1a1a;transform:scaleX(0.9367);">Autodesk AutoCAD 2019</span>
<span class="t" style="left:557.5px;top:7.0px;font-size:11px;line-height:15px;color:#1a1a1a;transform:scaleX(0.9410);">Чертеж1.dwg</span>
<span class="t" style="left:55.6px;top:29.8px;font-size:11px;line-height:15px;color:#ffffff;transform:scaleX(0.9170);">Главная</span>
<span class="t" style="left:112.0px;top:29.8px;font-size:11px;line-height:15px;color:#e6e6e6;transform:scaleX(0.9163);">Визуализация</span>
<span class="t" style="left:196.0px;top:29.8px;font-size:11px;line-height:15px;color:#e6e6e6;transform:scaleX(0.8926);">Вставка</span>
<span class="t" style="left:250.7px;top:29.8px;font-size:11px;line-height:15px;color:#e6e6e6;transform:scaleX(0.9042);">Вид</span>
<span class="t" style="left:285.7px;top:29.8px;font-size:11px;line-height:15px;color:#e6e6e6;transform:scaleX(0.9533);">Управление</span>
<span class="t" style="left:361.0px;top:29.8px;font-size:11px;line-height:15px;color:#e6e6e6;transform:scaleX(0.9469);">Вывод</span>
<span class="t" style="left:410.5px;top:29.8px;font-size:11px;line-height:15px;color:#e6e6e6;transform:scaleX(0.9443);">Надстройки</span>
<span class="t" style="left:485.7px;top:29.8px;font-size:11px;line-height:15px;color:#e6e6e6;transform:scaleX(0.9269);">Совместная работа</span>
<span class="t" style="left:597.5px;top:29.8px;font-size:11px;line-height:15px;color:#e6e6e6;transform:scaleX(0.9606);">Рекомендованные приложения</span>
<span class="t" style="left:20.7px;top:82.7px;font-size:11px;line-height:15px;color:#f2f2f2;transform:scaleX(0.9587);">Ящик</span>
<span class="t" style="left:60.0px;top:82.7px;font-size:11px;line-height:15px;color:#f2f2f2;transform:scaleX(0.8903);">Выдавить</span>
<span class="t" style="left:111.0px;top:82.7px;font-size:11px;line-height:15px;color:#f2f2f2;transform:scaleX(0.9275);">Вращать</span>
<span class="t" style="left:160.0px;top:82.7px;font-size:11px;line-height:15px;color:#f2f2f2;transform:scaleX(0.9416);">Лофт</span>
<span class="t" style="left:192.0px;top:82.7px;font-size:11px;line-height:15px;color:#f2f2f2;transform:scaleX(0.9021);">Сдвиг</span>
<span class="t" style="left:229.8px;top:82.7px;font-size:11px;line-height:15px;color:#f2f2f2;transform:scaleX(0.9372);">Вытягивание</span>
<span class="t" style="left:297.7px;top:82.7px;font-size:11px;line-height:15px;color:#f2f2f2;transform:scaleX(0.9255);">Объединение</span>
<span class="t" style="left:368.7px;top:82.7px;font-size:11px;line-height:15px;color:#f2f2f2;transform:scaleX(0.9487);">Вычитание</span>
<span class="t" style="left:428.4px;top:82.7px;font-size:11px;line-height:15px;color:#f2f2f2;transform:scaleX(0.9364);">Пересечение</span>
<span class="t" style="left:508.9px;top:82.7px;font-size:11px;line-height:15px;color:#f2f2f2;transform:scaleX(0.9432);">Отрезок</span>
<span class="t" style="left:567.7px;top:82.7px;font-size:11px;line-height:15px;color:#f2f2f2;transform:scaleX(1.0068);">Полигон</span>
<span class="t" style="left:634.8px;top:82.7px;font-size:11px;line-height:15px;color:#f2f2f2;transform:scaleX(0.9322);">Перенести</span>
<span class="t" style="left:699.0px;top:82.7px;font-size:11px;line-height:15px;color:#f2f2f2;transform:scaleX(0.9452);">Смещение</span>
<span class="t" style="left:757.2px;top:82.7px;font-size:11px;line-height:15px;color:#f2f2f2;transform:scaleX(0.9437);">Копировать</span>
<span class="t" style="left:819.8px;top:82.7px;font-size:11px;line-height:15px;color:#f2f2f2;transform:scaleX(0.8841);">Стереть</span>
<span class="t" style="left:869.2px;top:82.7px;font-size:11px;line-height:15px;color:#f2f2f2;transform:scaleX(0.9350);">3D-зеркало</span>
<span class="t" style="left:945.6px;top:82.7px;font-size:11px;line-height:15px;color:#f2f2f2;transform:scaleX(0.9241);">Отбор</span>
<span class="t" style="left:988.2px;top:82.7px;font-size:11px;line-height:15px;color:#f2f2f2;transform:scaleX(0.9053);">Без фильтра</span>
<span class="t" style="left:1075.5px;top:82.7px;font-size:11px;line-height:15px;color:#f2f2f2;transform:scaleX(0.9564);">Гизмо</span>
<span class="t" style="left:1067.8px;top:95.8px;font-size:11px;line-height:15px;color:#f2f2f2;transform:scaleX(0.9309);">переноса</span>
<span class="t" style="left:1129.7px;top:52.3px;font-size:11px;line-height:15px;color:#f2f2f2;transform:scaleX(0.9427);">Коорди...</span>
<span class="t" style="left:1189.7px;top:80.5px;font-size:11px;line-height:15px;color:#f2f2f2;transform:scaleX(0.9075);">Слои...</span>
<span class="t" style="left:92.0px;top:115.8px;font-size:11px;line-height:15px;color:#e8e8e8;transform:scaleX(0.8849);">Создать</span>
<span class="t" style="left:320.0px;top:115.8px;font-size:11px;line-height:15px;color:#e8e8e8;transform:scaleX(0.9079);">Редактировать</span>
<span class="t" style="left:528.5px;top:115.8px;font-size:11px;line-height:15px;color:#e8e8e8;transform:scaleX(0.9295);">Рисование</span>
<span class="t" style="left:735.0px;top:115.8px;font-size:11px;line-height:15px;color:#e8e8e8;transform:scaleX(0.9249);">Редактирование</span>
<span class="t" style="left:1014.6px;top:115.8px;font-size:11px;line-height:15px;color:#e8e8e8;transform:scaleX(0.9443);">Выбор</span>
<span class="t" style="left:789.4px;top:10.6px;font-size:10px;line-height:14px;color:#c0c0c0;transform:scaleX(0.9435);font-style:italic;-webkit-text-stroke:0.15px;">Введите ключевое слово/фразу</span>
<span class="t" style="left:988.2px;top:9.6px;font-size:11.5px;line-height:15.5px;color:#ececec;transform:scaleX(0.8940);">Вход в службы</span>
<span class="t" style="left:35.2px;top:138.8px;font-size:12px;line-height:16px;color:#c2c2c2;transform:scaleX(0.8801);">Начало</span>
<span class="t" style="left:143.4px;top:138.8px;font-size:12px;line-height:16px;color:#f4f4f4;transform:scaleX(0.8514);">Чертеж1</span>
<span class="t" style="left:11.6px;top:165.3px;font-size:10.5px;line-height:14.5px;color:#e4e4e4;transform:scaleX(1.0438);font-weight:700;-webkit-text-stroke:0.1px;">[−]</span>
<span class="t" style="left:25.8px;top:165.3px;font-size:10.5px;line-height:14.5px;color:#e4e4e4;transform:scaleX(0.8789);font-weight:700;-webkit-text-stroke:0.1px;">[Сверху]</span>
<span class="t" style="left:66.1px;top:165.3px;font-size:10.5px;line-height:14.5px;color:#e4e4e4;transform:scaleX(0.9664);font-weight:700;-webkit-text-stroke:0.1px;">[2D-каркас]</span>
<span class="t" style="left:1179.3px;top:243.8px;font-size:15px;line-height:19px;color:#4e4e4e;transform:scaleX(0.7716);">Сверху</span>
<span class="t" style="left:1192.3px;top:192.8px;font-size:19.5px;line-height:23.5px;color:#c4c6ca;transform:scaleX(0.8443);">С</span>
<span class="t" style="left:1143.3px;top:242.8px;font-size:19.5px;line-height:23.5px;color:#c4c6ca;transform:scaleX(0.8828);">З</span>
<span class="t" style="left:1241.5px;top:242.8px;font-size:19.5px;line-height:23.5px;color:#c4c6ca;transform:scaleX(0.8605);">В</span>
<span class="t" style="left:1189.8px;top:292.6px;font-size:19.5px;line-height:23.5px;color:#c4c6ca;transform:scaleX(0.8577);">Ю</span>
<span class="t" style="left:1181.2px;top:330.6px;font-size:10px;line-height:14px;color:#686c78;transform:scaleX(0.8929);">МСК</span>
<span class="t" style="left:350.4px;top:773.8px;font-size:11px;line-height:15px;color:#828282;transform:scaleX(0.9229);font-style:italic;font-family:'Liberation Mono', monospace;-webkit-text-stroke:0;">Введите команду</span>
<span class="t" style="left:27.6px;top:794.3px;font-size:11px;line-height:15px;color:#ffffff;transform:scaleX(0.9321);font-weight:700;">Модель</span>
<span class="t" style="left:88.3px;top:794.3px;font-size:11px;line-height:15px;color:#c4c4c4;transform:scaleX(0.9057);">Лист1</span>
<span class="t" style="left:136.0px;top:794.3px;font-size:11px;line-height:15px;color:#c4c4c4;transform:scaleX(0.9224);">Лист2</span>
<span class="t" style="left:794.5px;top:797.3px;font-size:12px;line-height:16px;color:#f0f0f0;transform:scaleX(0.8341);">МОДЕЛЬ</span>
<span class="t" style="left:1118.0px;top:797.3px;font-size:12px;line-height:16px;color:#f0f0f0;transform:scaleX(0.8390);">1:1</span>
<span class="t" style="left:1037.4px;top:623.1px;font-size:11px;line-height:15px;color:#ffffff;transform:scaleX(0.9151);font-weight:700;-webkit-text-stroke:0;">Рисование и аннотации</span>
<span class="t" style="left:1037.4px;top:643.9px;font-size:11px;line-height:15px;color:#ffffff;transform:scaleX(0.9101);font-weight:700;-webkit-text-stroke:0;">Основы 3D</span>
<span class="t" style="left:1037.4px;top:665.8px;font-size:11px;line-height:15px;color:#ffffff;transform:scaleX(0.9309);font-weight:700;-webkit-text-stroke:0;">3D-моделирование</span>
<span class="t" style="left:1037.4px;top:686.3px;font-size:11px;line-height:15px;color:#ffffff;transform:scaleX(0.9067);font-weight:700;-webkit-text-stroke:0;">Классический AutoCAD</span>
<span class="t" style="left:1037.4px;top:712.0px;font-size:11px;line-height:15px;color:#ffffff;transform:scaleX(0.9136);font-weight:700;-webkit-text-stroke:0;">Сохранить текущее как...</span>
<span class="t" style="left:1037.4px;top:733.4px;font-size:11px;line-height:15px;color:#ffffff;transform:scaleX(0.9109);font-weight:700;-webkit-text-stroke:0;">Параметры рабочего пространства...</span>
<span class="t" style="left:1037.4px;top:754.4px;font-size:11px;line-height:15px;color:#ffffff;transform:scaleX(0.8886);font-weight:700;-webkit-text-stroke:0;">Адаптация...</span>
<span class="t" style="left:1037.4px;top:775.2px;font-size:11px;line-height:15px;color:#ffffff;transform:scaleX(0.9256);font-weight:700;-webkit-text-stroke:0;">Отображение меток рабочего пространства</span>
<!--TOP-->
</body>
</html>
